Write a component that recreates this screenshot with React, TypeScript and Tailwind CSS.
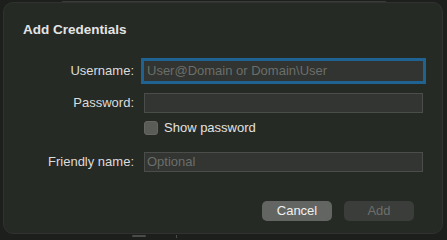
export default function App() {
  return (
    <div
      className="relative w-[447px] h-[240px] overflow-hidden bg-[#1d1f1c] text-[13px] text-[#dcdcdb]"
      style={{ fontFamily: '"Liberation Sans", Arial, sans-serif' }}
    >
      {/* window content peeking out behind the sheet */}
      <div className="absolute left-[62px] top-0 w-[324px] h-[2px] border-b border-[#3a3c39]" />
      <div className="absolute left-[132px] top-[235px] w-[14px] h-[2px] rounded bg-[#4a4c49]" />
      <div className="absolute left-[176px] top-[235px] w-[1px] h-[3px] bg-[#4a4c49]" />

      <div className="absolute left-[3px] top-[2px] w-[440px] h-[232px] rounded-[10px] bg-[#262a25] border border-[#2f322e] flex flex-col px-[19px] pt-[19px]">
        <h1 className="h-4 leading-4 font-bold text-[13.5px] text-[#e4e4e3]">Add Credentials</h1>

        <div className="mt-[23px] flex items-center gap-[10px]">
          <label className="w-[111px] shrink-0 text-right">Username:</label>
          <div className="w-[279px] shrink-0 h-[20px] bg-[#313430] shadow-[0_0_0_3px_#1e6391] px-[3px] flex items-center text-[#6b6e6a]">
            User@Domain or Domain\User
          </div>
        </div>

        <div className="mt-[12px] flex items-center gap-[10px]">
          <label className="w-[111px] shrink-0 text-right">Password:</label>
          <div className="w-[279px] shrink-0 h-[20px] bg-[#323531] border border-[#4a4d49]" />
        </div>

        <div className="mt-[8px] flex items-center gap-[6px] pl-[121px] h-[14px]">
          <span className="w-[14px] h-[14px] rounded-[3px] bg-[#5a5c58] border border-[#656764]" />
          <span className="text-[#e2e2e1]">Show password</span>
        </div>

        <div className="mt-[17px] flex items-center gap-[10px]">
          <label className="w-[111px] shrink-0 text-right">Friendly name:</label>
          <div className="w-[279px] shrink-0 h-[20px] bg-[#323531] border border-[#4a4d49] px-[2px] flex items-center text-[#6b6e6a]">
            Optional
          </div>
        </div>

        <div className="mt-[29px] flex justify-end gap-[12px] pr-[9px]">
          <button className="w-[70px] h-[20px] rounded-[5px] bg-[#636562] text-[#f0f0ef]">Cancel</button>
          <button className="w-[70px] h-[20px] rounded-[5px] bg-[#3a3d39] text-[#6c6f6b]">Add</button>
        </div>
      </div>
    </div>
  );
}
